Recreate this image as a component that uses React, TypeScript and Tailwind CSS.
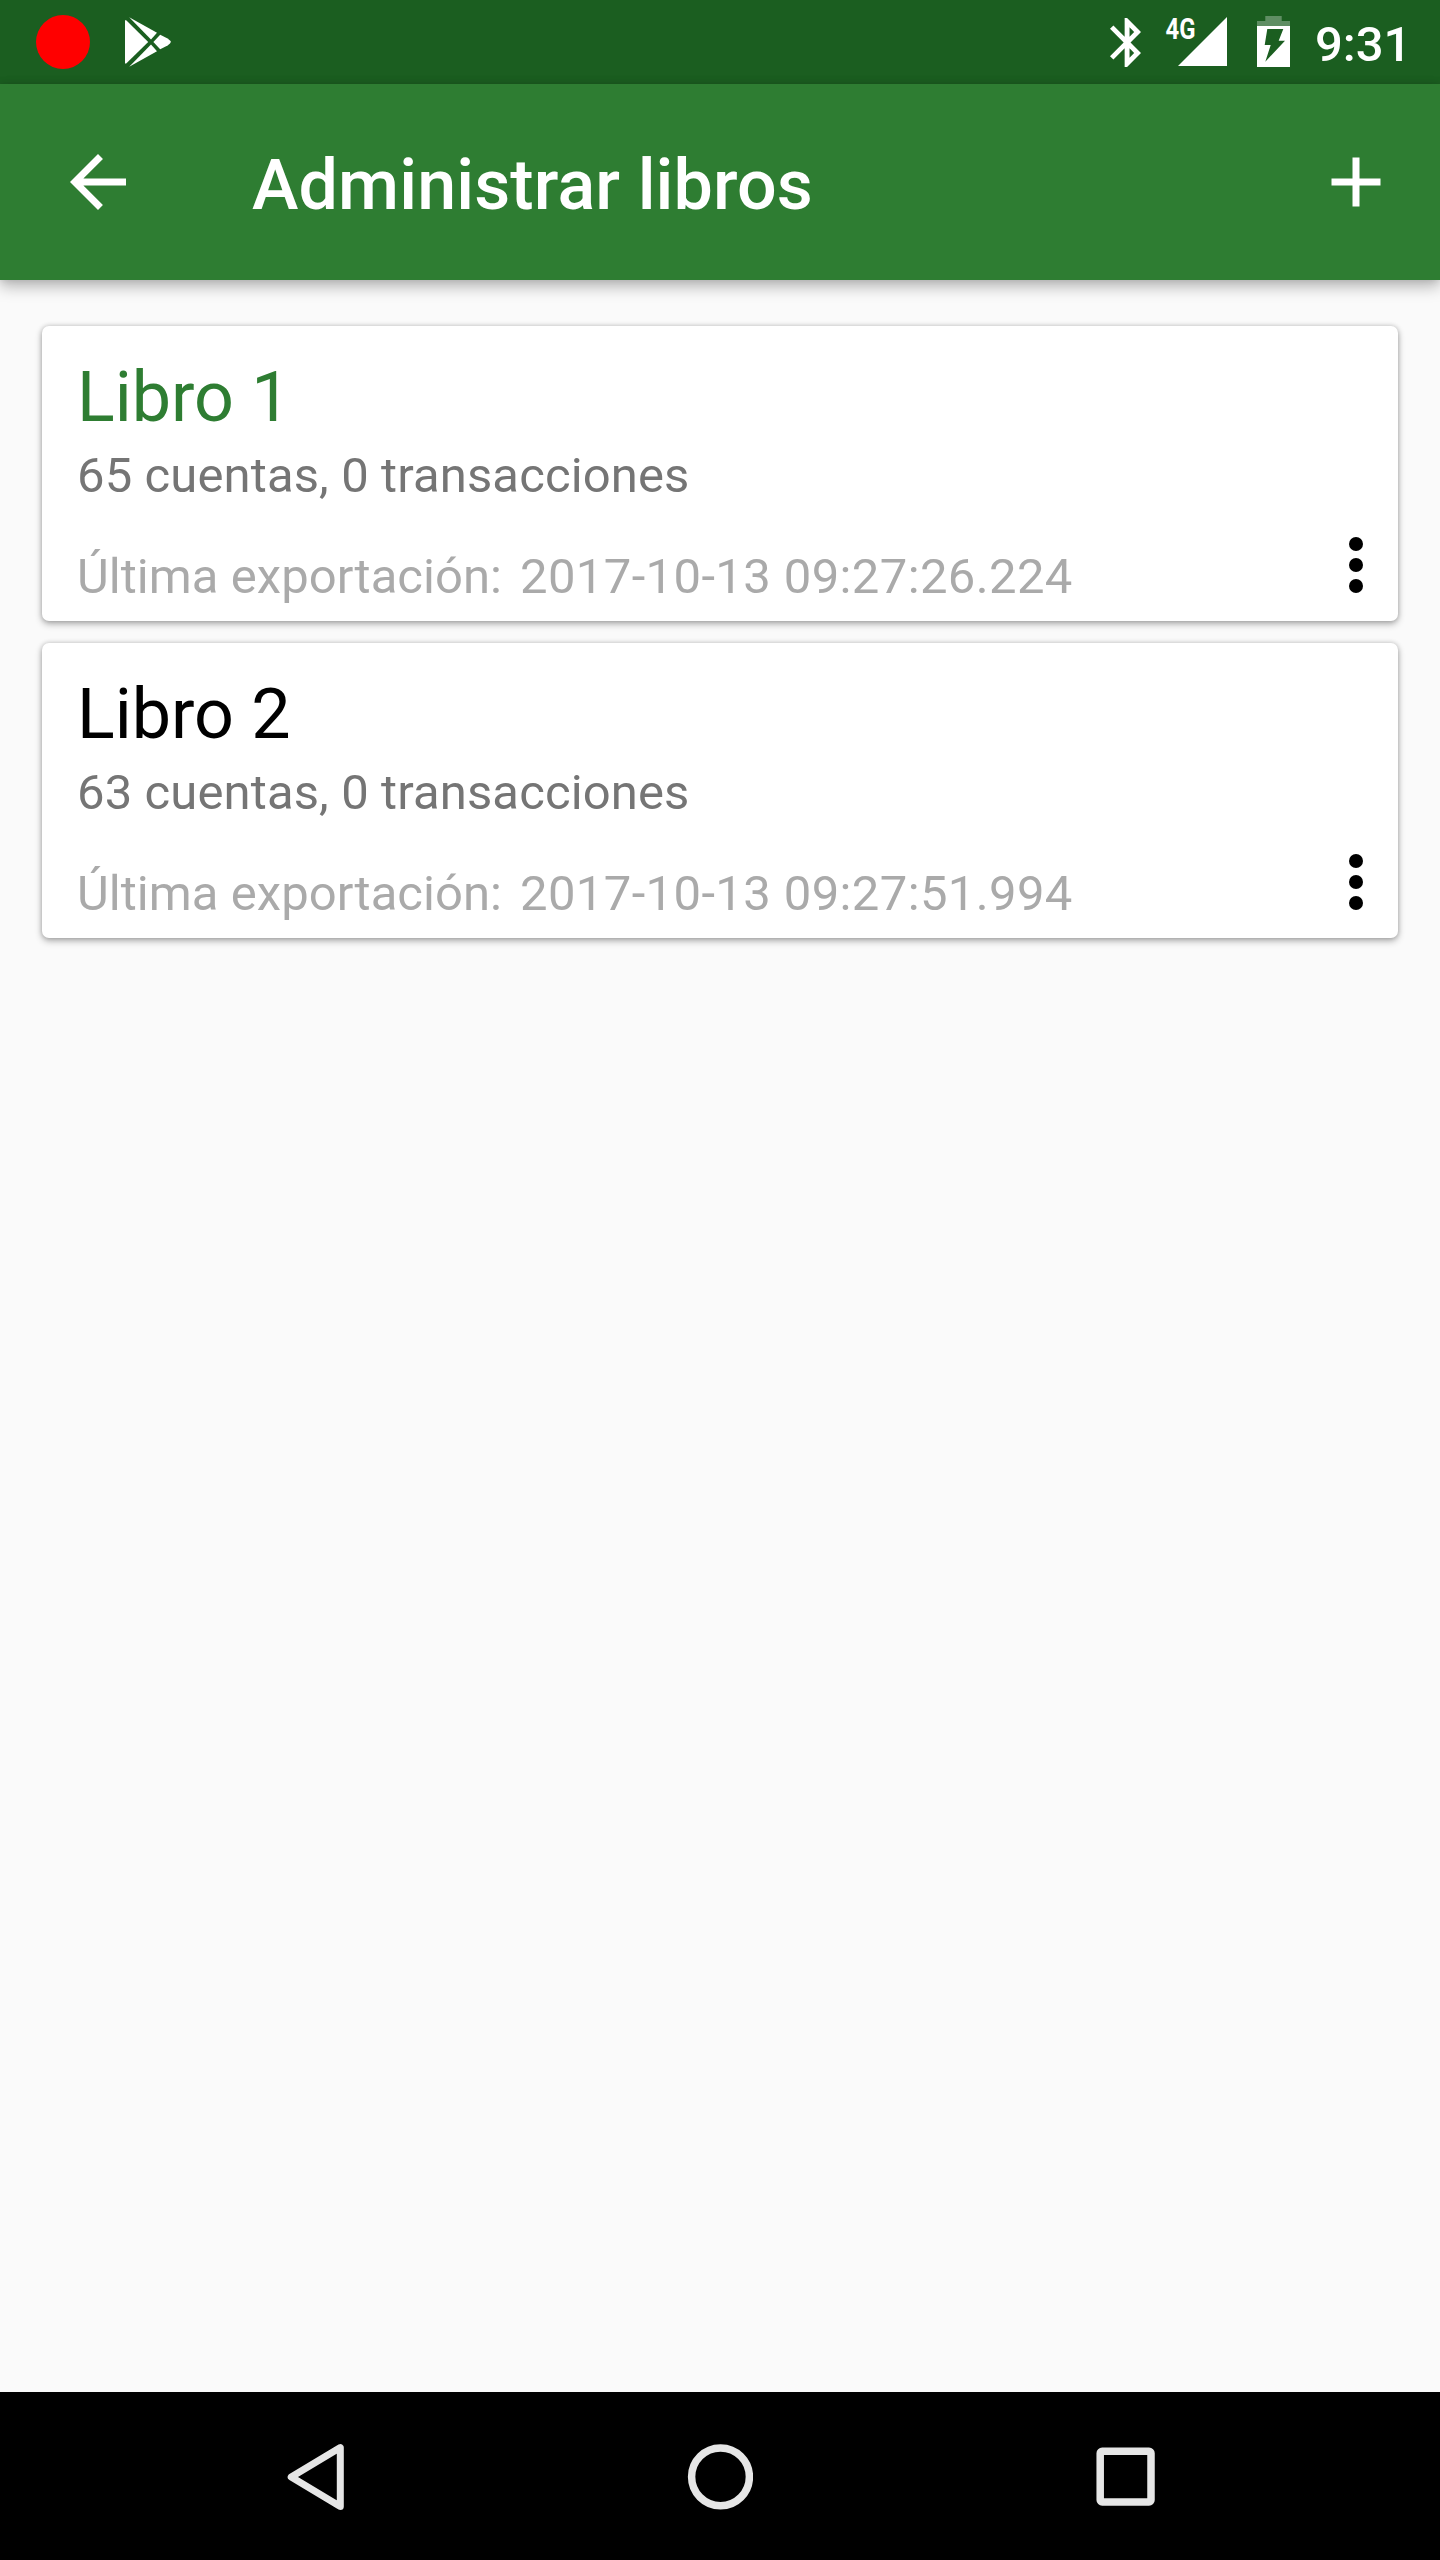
import React from "react";

type Book = { name: string; summary: string; exported: string; active: boolean };

const books: Book[] = [
  { name: "Libro 1", summary: "65 cuentas, 0 transacciones", exported: "2017-10-13 09:27:26.224", active: true },
  { name: "Libro 2", summary: "63 cuentas, 0 transacciones", exported: "2017-10-13 09:27:51.994", active: false },
];

function StatusBar() {
  return (
    <div className="flex h-[84px] items-start bg-[#1b5e20] text-white">
      <div className="mt-[15px] ml-9 size-[54px] rounded-full bg-[#ff0000]" />
      <svg className="mt-[17px] ml-[35px] h-[50px] w-[46px]" viewBox="0 0 46 50" fill="currentColor">
        <path d="M0 3.2 L1.2 3.2 L23.2 25 L1.2 46.6 L0 46.6Z" />
        <path d="M4.2 0.3 L32 15.7 L26 22.4Z" />
        <path d="M4.2 49.7 L32 34.3 L26 27.6Z" />
        <path d="M35.2 17.8 L42.6 21.4 Q45.8 23.6 45.8 25 Q45.8 26.4 42.6 28.6 L35.2 32.2 L28.4 25Z" />
      </svg>
      <div className="ml-auto flex items-start pr-[35px]">
        <svg className="mt-[18px] h-[49px] w-[31px]" viewBox="5 2 12.7 20" fill="currentColor">
          <path d="M17.7 7.7L12 2h-1v7.6L6.4 5 5 6.4l5.6 5.6L5 17.6 6.4 19l4.6-4.6V22h1l5.7-5.7-4.3-4.3 4.3-4.3zM13 5.8l1.9 1.9L13 9.6V5.8zm1.9 10.5L13 18.2v-3.8l1.9 1.9z" />
        </svg>
        <svg className="mt-[9px] ml-[24px] h-[57px] w-[62px] overflow-visible" viewBox="0 -8 62 57" fill="currentColor">
          <text transform="translate(0.5 21.8) scale(0.81 1)" fontSize="29.5" fontWeight="700" fontFamily="Roboto, sans-serif">
            4G
          </text>
          <path d="M13 49 L62 0 V49Z" />
        </svg>
        <svg className="mt-[16px] ml-[30px] h-[51px] w-[33px]" viewBox="0 0 33 51" fill="currentColor">
          <path opacity=".3" d="M8.3 0 H24.7 V5 H33 V10 H0 V5 H8.3Z" />
          <path fillRule="evenodd" d="M0 10 H33 V51 H0Z M10.3 13 L26.3 13 L21.7 24.7 L28 24.7 L8.3 45.7 L13.7 29 L7.7 29Z" />
        </svg>
        <span className="mt-[16px] ml-[25px] w-[90px] text-[49px] leading-[57px] font-medium whitespace-nowrap">9:31</span>
      </div>
    </div>
  );
}

function BookCard({ book }: { book: Book }) {
  return (
    <article className="relative flex h-[295px] flex-col rounded-[7px] bg-white pl-[35px] shadow-[0_3px_7px_rgba(0,0,0,0.3),0_0_5px_rgba(0,0,0,0.18)]">
      <h2 className={book.active ? "mt-[30px] text-[70px] leading-[82px] text-[#2e7d32]" : "mt-[30px] text-[70px] leading-[82px] text-black"}>
        {book.name}
      </h2>
      <p className="mt-[9px] text-[49px] leading-[57px] tracking-[0.12px] text-[#757575]">{book.summary}</p>
      <p className="mt-[44px] flex text-[49px] leading-[57px] text-[#aaaaaa]">
        <span className="w-[443px] tracking-[0.05px] whitespace-nowrap">Última exportación:</span>
        <span className="tracking-[0.38px] whitespace-nowrap">{book.exported}</span>
      </p>
      <button aria-label="Opciones" className="absolute right-0 bottom-[14px] size-[84px] text-black">
        <svg className="size-[84px]" viewBox="0 0 24 24" fill="currentColor">
          <circle cx="12" cy="6" r="2" />
          <circle cx="12" cy="12" r="2" />
          <circle cx="12" cy="18" r="2" />
        </svg>
      </button>
    </article>
  );
}

export default function App() {
  return (
    <div className="flex h-[2560px] w-[1440px] flex-col overflow-hidden bg-[#fafafa] font-['Roboto',sans-serif]">
      <StatusBar />
      <header className="relative flex h-[196px] items-center bg-[#2e7d32] px-[42px] text-white shadow-[0_7px_14px_rgba(0,0,0,0.26),0_0_8px_rgba(0,0,0,0.12)]">
        <svg className="ml-[14px] size-[84px]" viewBox="0 0 24 24" fill="currentColor">
          <path d="M20 11H7.83l5.59-5.59L12 4l-8 8 8 8 1.41-1.41L7.83 13H20v-2z" />
        </svg>
        <h1 className="mt-[6px] ml-[112px] text-[70px] leading-[82px] font-medium tracking-[0.12px]">Administrar libros</h1>
        <svg className="ml-auto size-[84px]" viewBox="0 0 24 24" fill="currentColor">
          <path d="M19 13h-6v6h-2v-6H5v-2h6V5h2v6h6v2z" />
        </svg>
      </header>
      <main className="flex flex-1 flex-col gap-[22px] px-[42px] pt-[46px]">
        {books.map((b) => (
          <BookCard key={b.name} book={b} />
        ))}
      </main>
      <nav className="h-[168px] bg-black">
        <div className="flex h-full items-center pt-px pl-[287px] text-[#e6e6e6]">
          <svg className="h-[68px] w-[57px]" viewBox="0 0 57 68" fill="none" stroke="currentColor" strokeWidth="7" strokeLinejoin="round">
            <path d="M53.3 4.6 V63.4 L4.2 34Z" />
          </svg>
          <svg className="ml-[343px] size-[66px]" viewBox="0 0 66 66" fill="none" stroke="currentColor" strokeWidth="7.5">
            <circle cx="33.5" cy="32.8" r="28.9" />
          </svg>
          <svg className="ml-[343px] size-[59px]" viewBox="0 0 59 59" fill="none" stroke="currentColor" strokeWidth="7.5">
            <rect x="4.2" y="4.2" width="50.8" height="50.8" rx="2" />
          </svg>
        </div>
      </nav>
    </div>
  );
}
